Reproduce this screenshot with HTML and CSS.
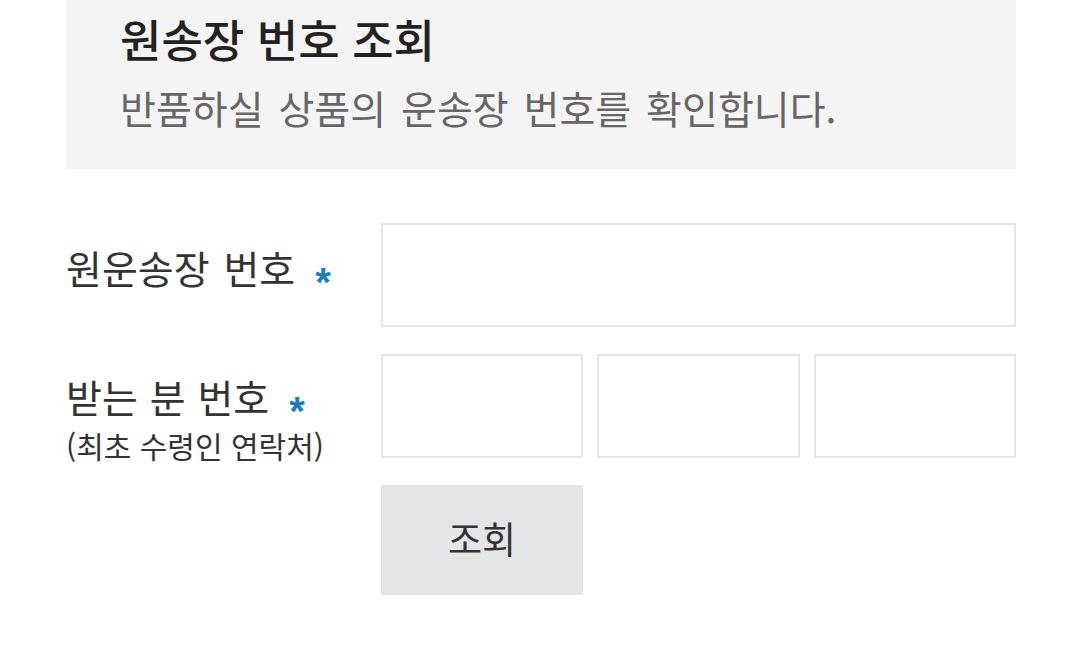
FILE: index.html
```html
<!DOCTYPE html>
<html lang="ko">
<head>
<meta charset="utf-8">
<link rel="stylesheet" href="styles.css">
</head>
<body>
<div class="page">
  <div class="intro">
    <h1 class="intro-title">원송장 번호 조회</h1>
    <p class="intro-desc">반품하실 상품의 운송장 번호를 확인합니다.</p>
  </div>
  <form class="form">
    <div class="label label-1">원운송장 번호<span class="req">*</span></div>
    <div class="field"><input class="input" type="text"></div>
    <div class="label label-2">
      <div class="label-main">받는 분 번호<span class="req">*</span></div>
      <div class="sub">(최초 수령인 연락처)</div>
    </div>
    <div class="field field-split">
      <input class="input" type="text">
      <input class="input" type="text">
      <input class="input" type="text">
    </div>
    <div></div>
    <div class="field-btn"><button class="btn" type="button">조회</button></div>
  </form>
</div>
</body>
</html>
```

FILE: styles.css
```css
* { box-sizing: border-box; }
html, body { margin: 0; padding: 0; background: #fff; }
body {
  font-family: "Noto Sans CJK KR", "Noto Sans", sans-serif;
  color: #333;
}
.page {
  width: 950px;
  margin-left: 66px;
}
.intro {
  background: #f4f4f4;
  height: 169px;
  padding: 10px 0 0 54px;
}
.intro-title {
  margin: 0;
  font-size: 45px;
  line-height: 58px;
  font-weight: 500;
  color: #222;
}
.intro-desc {
  margin: 15px 0 0;
  font-size: 39px;
  line-height: 48px;
  word-spacing: 4px;
  color: #666;
  font-weight: 400;
}
.form {
  margin-top: 54px;
  display: grid;
  grid-template-columns: 315px minmax(0, 1fr);
  grid-template-rows: 104px 104px 110px;
  row-gap: 27px;
}
.label {
  font-size: 39px;
  line-height: 48px;
  color: #333;
}
.label-1 { padding-top: 20px; word-spacing: 3px; }
.label-2 { padding-top: 18px; word-spacing: 1px; }
.label-main { height: 48px; }
.sub {
  font-size: 30px;
  line-height: 36px;
  word-spacing: 0;
  margin-top: 7px;
}
.req {
  color: #1b7cc0;
  font-size: 40px;
  font-weight: 700;
  margin-left: 20px;
  vertical-align: -0.3em;
  line-height: 0;
  font-family: "Liberation Sans", sans-serif;
}
.field { height: 104px; display: flex; }
.field-split { gap: 14px; }
.input {
  flex: 1 1 0;
  width: 0;
  min-width: 0;
  height: 104px;
  border: 2px solid #e6e6e6;
  background: #fff;
  margin: 0;
  padding: 0 16px;
  font-size: 32px;
  outline: none;
}
.field-btn { display: flex; }
.btn {
  width: 202px;
  height: 110px;
  border: none;
  background: #e4e5e7;
  color: #333;
  font-family: "Noto Sans CJK KR", sans-serif;
  font-size: 37px;
  padding: 0 0 4px;
  margin: 0;
}
```
